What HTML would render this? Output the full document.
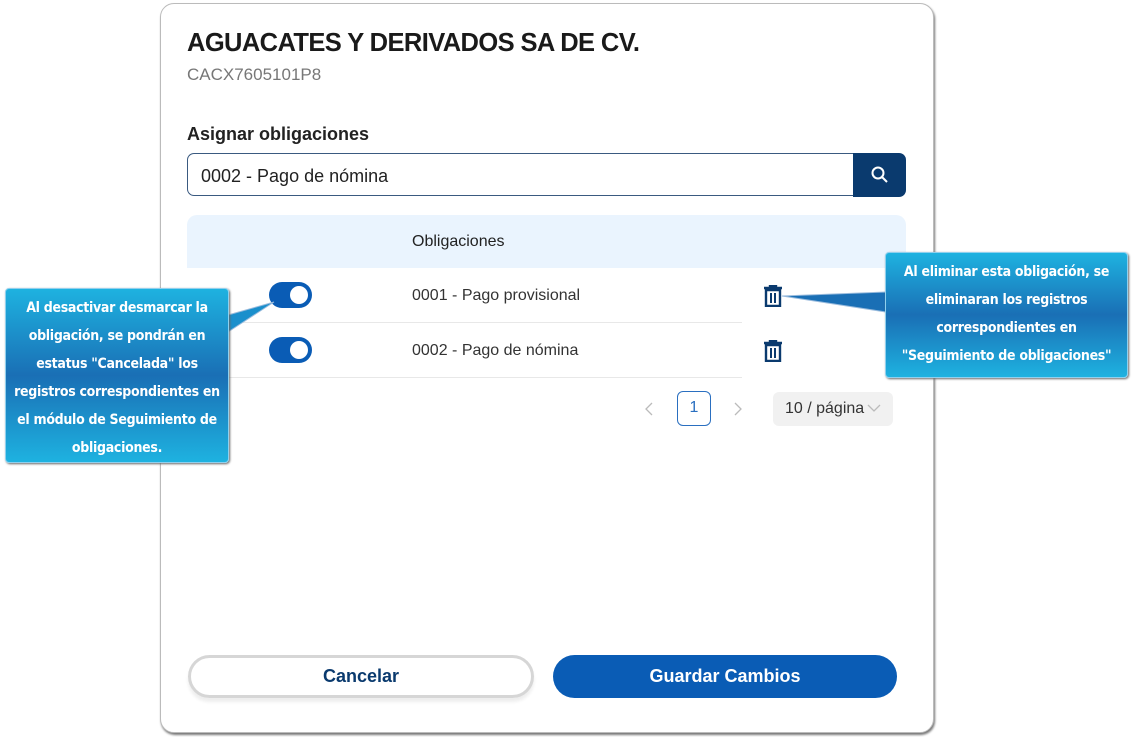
<!DOCTYPE html>
<html><head><meta charset="utf-8"><style>
body{margin:0;width:1134px;height:737px;background:#fff;position:relative;overflow:hidden;font-family:"Liberation Sans",sans-serif}
.modal{position:absolute;left:160px;top:3px;width:772px;height:728px;background:#fff;border:1px solid #bbb;border-radius:14px;box-shadow:1px 2px 2px #777}
.abs{position:absolute}
.t1{left:187px;top:29px;font-size:25.5px;font-weight:bold;color:#1a1a1a;letter-spacing:-0.6px}
.t2{left:187px;top:65px;font-size:17px;color:#777}
.lbl{left:187px;top:124px;font-size:18px;font-weight:bold;color:#222}
.inp{left:187px;top:153px;width:666px;height:43px;border:1px solid #3a5a80;border-right:none;border-radius:7px 0 0 7px;box-sizing:border-box}
.inp span{position:absolute;left:13px;top:12px;font-size:18px;color:#222}
.sbtn{left:853px;top:153px;width:53px;height:44px;background:#0a3a6e;border-radius:0 7px 7px 0}
.hdr{left:187px;top:215px;width:719px;height:53px;background:#eaf4fe;border-radius:10px 10px 0 0}
.hdr span{position:absolute;left:225px;top:18px;font-size:16px;color:#222}
.row{left:187px;width:555px;height:1px;background:#e8e8e8}
.tog{width:43px;height:26px;border-radius:13px;background:#0a5cb5}
.tog:after{content:"";position:absolute;right:4px;top:4px;width:18px;height:18px;border-radius:50%;background:#fff}
.rt{left:412px;font-size:16px;color:#333}
.btn{top:655px;height:43px;border-radius:22px;font-size:18px;font-weight:bold;text-align:center;line-height:43px;box-sizing:border-box}
.call{color:#fff;font-weight:bold;font-size:14px;letter-spacing:-0.3px;white-space:nowrap;text-align:center;line-height:28px;border-radius:4px;background:linear-gradient(#1eb2e0 0%,#1a6fb5 50%,#1eb2e0 100%);box-shadow:1px 1px 2px #666;border:1px solid #8fd0ee;font-family:"DejaVu Sans Condensed","Liberation Sans",sans-serif;box-sizing:border-box}
</style></head><body>
<div class="modal"></div>
<div class="abs t1">AGUACATES Y DERIVADOS SA DE CV.</div>
<div class="abs t2">CACX7605101P8</div>
<div class="abs lbl">Asignar obligaciones</div>
<div class="abs inp"><span>0002 - Pago de nómina</span></div>
<div class="abs sbtn"><svg width="53" height="44"><circle cx="25" cy="20" r="5.5" fill="none" stroke="#fff" stroke-width="2"/><path d="M29 24l5 5" stroke="#fff" stroke-width="2"/></svg></div>
<div class="abs hdr"><span>Obligaciones</span></div>
<div class="abs row" style="top:322px"></div>
<div class="abs row" style="top:377px"></div>
<div class="abs tog" style="left:269px;top:282px"></div>
<div class="abs tog" style="left:269px;top:337px"></div>
<div class="abs rt" style="top:287px">0001 - Pago provisional</div>
<div class="abs rt" style="top:342px">0002 - Pago de nómina</div>
<svg class="abs" style="left:763px;top:285px" width="20" height="22"><path d="M1 3h18M7 3V1h6v2M3 5h14v16H3z" fill="none" stroke="#0a3a6e" stroke-width="2.4"/><path d="M8 8v10M12 8v10" stroke="#0a3a6e" stroke-width="2"/></svg>
<svg class="abs" style="left:763px;top:340px" width="20" height="22"><path d="M1 3h18M7 3V1h6v2M3 5h14v16H3z" fill="none" stroke="#0a3a6e" stroke-width="2.4"/><path d="M8 8v10M12 8v10" stroke="#0a3a6e" stroke-width="2"/></svg>
<svg class="abs" style="left:644px;top:402px" width="10" height="14"><path d="M8 1L2 7l6 6" fill="none" stroke="#bbb" stroke-width="1.3"/></svg>
<div class="abs" style="left:677px;top:391px;width:34px;height:35px;border:1.5px solid #2a6fc0;border-radius:6px;box-sizing:border-box;text-align:center;line-height:32px;color:#2a6fc0;font-size:16px">1</div>
<svg class="abs" style="left:733px;top:402px" width="10" height="14"><path d="M2 1l6 6-6 6" fill="none" stroke="#bbb" stroke-width="1.3"/></svg>
<div class="abs" style="left:773px;top:392px;width:120px;height:34px;background:#f1f1f1;border-radius:6px;font-size:16px;color:#333;line-height:34px;padding-left:12px;box-sizing:border-box">10 / página</div>
<svg class="abs" style="left:867px;top:404px" width="14" height="9"><path d="M1 1l6 6 6-6" fill="none" stroke="#bbb" stroke-width="1.3"/></svg>
<div class="abs btn" style="left:188px;width:346px;border:3px solid #d6d6d6;color:#0a3a6e;line-height:37px;box-shadow:0 4px 3px #eee">Cancelar</div>
<div class="abs btn" style="left:553px;width:344px;background:#0a5cb5;color:#fff">Guardar Cambios</div>
<svg class="abs" style="left:0;top:0" width="1134" height="737"><polygon points="228,315 228,332 274,302" fill="#1a8fcc" stroke="#9bd" stroke-width="1"/><polygon points="886,292 886,312 782,296" fill="#1a6fb5" stroke="#9bd" stroke-width="1"/></svg>
<div class="abs call" style="left:5px;top:288px;width:224px;height:175px;padding-top:5px">Al desactivar desmarcar la<br>obligación, se pondrán en<br>estatus "Cancelada" los<br>registros correspondientes en<br>el módulo de Seguimiento de<br>obligaciones.</div>
<div class="abs call" style="left:885px;top:252px;width:243px;height:126px;padding-top:5px">Al eliminar esta obligación, se<br>eliminaran los registros<br>correspondientes en<br>"Seguimiento de obligaciones"</div>
</body></html>
